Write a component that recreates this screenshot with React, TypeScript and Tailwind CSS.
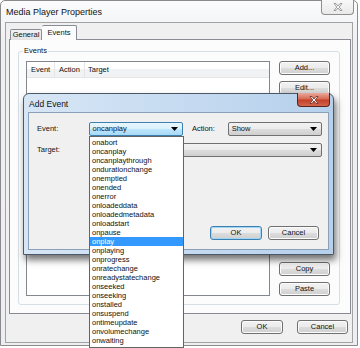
import React from "react";

const EVENTS = [
  "onabort",
  "oncanplay",
  "oncanplaythrough",
  "ondurationchange",
  "onemptied",
  "onended",
  "onerror",
  "onloadeddata",
  "onloadedmetadata",
  "onloadstart",
  "onpause",
  "onplay",
  "onplaying",
  "onprogress",
  "onratechange",
  "onreadystatechange",
  "onseeked",
  "onseeking",
  "onstalled",
  "onsuspend",
  "ontimeupdate",
  "onvolumechange",
  "onwaiting",
];

function Button({
  label,
  className = "",
  focused = false,
}: {
  label: string;
  className?: string;
  focused?: boolean;
}) {
  return (
    <div
      className={`flex items-center justify-center rounded-[3px] border bg-[linear-gradient(#f2f2f2_0%,#ebebeb_50%,#dddddd_51%,#cfcfcf_100%)] ${
        focused
          ? "border-[#3c7fb1] shadow-[inset_0_0_0_1px_#9fd5f5]"
          : "border-[#707070] shadow-[inset_0_0_0_1px_#fcfcfc]"
      } ${className}`}
    >
      {label}
    </div>
  );
}

function Combo({
  value,
  focused = false,
  className = "",
}: {
  value: string;
  focused?: boolean;
  className?: string;
}) {
  return (
    <div
      className={`flex h-[14px] items-center justify-between rounded-[2px] border pl-[3px] pr-[4px] ${
        focused
          ? "border-[#3c7fb1] bg-[linear-gradient(#eaf6fd_0%,#d9f0fc_50%,#bee6fd_51%,#a7d9f5_100%)]"
          : "border-[#707070] bg-[linear-gradient(#f2f2f2_0%,#ebebeb_50%,#dddddd_51%,#cfcfcf_100%)]"
      } ${className}`}
    >
      <span>{value}</span>
      <svg width="7" height="4" viewBox="0 0 7 4">
        <path d="M0 0h7L3.5 4z" fill="#000" />
      </svg>
    </div>
  );
}

export default function App() {
  return (
    <div className="relative h-[348px] w-[360px] overflow-hidden bg-white font-['Liberation_Sans',Arial,sans-serif] text-[7.5px] leading-none text-[#111]">
      {/* Main window */}
      <div className="flex h-[346px] w-[358px] flex-col rounded-t-[5px] border border-[#8a8a8a] bg-[linear-gradient(#fbfbfc,#eef0f3_40px,#eceef1)] px-[4px] pb-[2px]">
        <div className="flex h-[21px] items-start justify-between">
          <span className="pl-[1px] pt-[7px] text-[9px]">Media Player Properties</span>
          <div className="-mt-[1px] mr-[-1px] flex h-[15px] w-[33px] items-center justify-center rounded-b-[4px] border border-t-0 border-[#8f8f8f] bg-[linear-gradient(#f8f8f8,#e9e9e9)]">
            <svg width="10" height="8" viewBox="0 0 10 8">
              <path
                d="M1 0.5h2L5 3l2-2.5h2L6.2 4 9 7.5H7L5 5 3 7.5H1L3.8 4z"
                fill="#f5f5f5"
                stroke="#8a8a8a"
                strokeWidth="0.8"
              />
            </svg>
          </div>
        </div>

        {/* Client area */}
        <div className="flex flex-1 flex-col border border-[#a3a3a3] bg-[#f0f0f0] pl-[3px] pr-[1px] pt-[2px]">
          {/* Tabs */}
          <div className="relative z-10 -mb-[1px] flex h-[15px] items-end pl-[1px]">
            <div className="flex h-[11px] w-[32px] items-center justify-center rounded-t-[2px] border border-b-0 border-[#898c95] bg-[linear-gradient(#f2f2f2,#e3e3e3)]">
              General
            </div>
            <div className="flex h-[15px] w-[35px] items-center justify-center rounded-t-[2px] border border-b-0 border-l-0 border-[#898c95] bg-[#fcfcfc] pb-[1px]">
              Events
            </div>
          </div>

          {/* Tab panel */}
          <div className="flex h-[275px] flex-col border border-[#898c95] bg-[#fcfcfc] pb-[8px] pl-[8px] pr-[10px] pt-[11px]">
            <div className="relative flex flex-1 gap-[9px] rounded-[3px] border border-[#d5dfe5] pb-[8px] pl-[7px] pr-[7px] pt-[9px]">
              <span className="absolute left-[4px] top-[-5px] bg-[#fcfcfc] px-[1px]">Events</span>
              {/* List view */}
              <div className="flex w-[244px] flex-col border border-[#828790] bg-white">
                <div className="flex h-[16px] items-center border-b border-[#e5e5e5] bg-[linear-gradient(#ffffff_0%,#ffffff_45%,#f1f2f4_46%,#f1f2f4_100%)]">
                  <div className="flex h-full w-[28px] items-center border-r border-[#e5e5e5] pl-[4px]">Event</div>
                  <div className="flex h-full w-[30px] items-center border-r border-[#e5e5e5] pl-[4px]">Action</div>
                  <div className="flex h-full items-center pl-[3px]">Target</div>
                </div>
              </div>
              {/* Buttons */}
              <div className="flex w-[51px] flex-col justify-between">
                <div className="flex flex-col gap-[6px]">
                  <Button label="Add..." className="h-[14px]" />
                  <Button label="Edit..." className="h-[14px]" />
                  <Button label="Remove" className="h-[14px]" />
                </div>
                <div className="flex flex-col gap-[6px]">
                  <Button label="Copy" className="h-[14px]" />
                  <Button label="Paste" className="h-[14px]" />
                </div>
              </div>
            </div>
          </div>

          {/* Bottom buttons */}
          <div className="mt-[6px] flex justify-end gap-[14px] pr-[3px]">
            <Button label="OK" className="h-[14px] w-[42px]" />
            <Button label="Cancel" className="h-[14px] w-[51px]" />
          </div>
        </div>
      </div>

      {/* Add Event dialog */}
      <div className="absolute left-[23px] top-[93px] flex h-[162px] w-[311px] flex-col rounded-t-[6px] border border-[#4d5866] bg-[linear-gradient(90deg,#d7e6f5,#c3d9f0_60%,#b6d0ec)] px-[4px] pb-[4px] shadow-[2px_5px_7px_rgba(0,0,0,0.55)]">
        <div className="flex h-[18px] items-start justify-between">
          <span className="pl-[1px] pt-[6px] text-[8.5px]">Add Event</span>
          <div className="-mt-[1px] mr-[-1px] flex h-[14px] w-[33px] items-center justify-center rounded-b-[4px] border border-t-0 border-[#5b2319] bg-[linear-gradient(#e9a99c,#d56a55_45%,#c4402a_55%,#d2654e)]">
            <svg width="10" height="8" viewBox="0 0 10 8">
              <path
                d="M1 0.5h2L5 3l2-2.5h2L6.2 4 9 7.5H7L5 5 3 7.5H1L3.8 4z"
                fill="#ffffff"
                stroke="#6a2a1e"
                strokeWidth="0.8"
              />
            </svg>
          </div>
        </div>
        <div className="flex flex-1 flex-col border border-[#8aa0b8] bg-[#f0f0f0] pb-[9px] pl-[8px] pr-[6px] pt-[9px]">
          <div className="flex items-center">
            <span className="w-[52px]">Event:</span>
            <Combo value="oncanplay" focused className="w-[95px]" />
            <span className="ml-[9px] w-[36px]">Action:</span>
            <Combo value="Show" className="w-[95px]" />
          </div>
          <div className="mt-[7px] flex items-center">
            <span className="w-[52px]">Target:</span>
            <Combo value="" className="w-[235px]" />
          </div>
          <div className="mt-auto flex justify-end gap-[6px] pr-[3px]">
            <Button label="OK" focused className="h-[14px] w-[52px]" />
            <Button label="Cancel" className="h-[14px] w-[51px]" />
          </div>
        </div>
      </div>

      {/* Open drop-down list */}
      <div className="absolute left-[89px] top-[136px] flex w-[95px] flex-col border border-[#646464] bg-white pt-[1px] pb-[2px]">
        {EVENTS.map((ev) => (
          <div
            key={ev}
            className={`flex h-[9px] items-center pl-[2px] ${
              ev === "onplay" ? "bg-[#3399ff] text-white" : ""
            }`}
          >
            {ev}
          </div>
        ))}
      </div>
    </div>
  );
}
